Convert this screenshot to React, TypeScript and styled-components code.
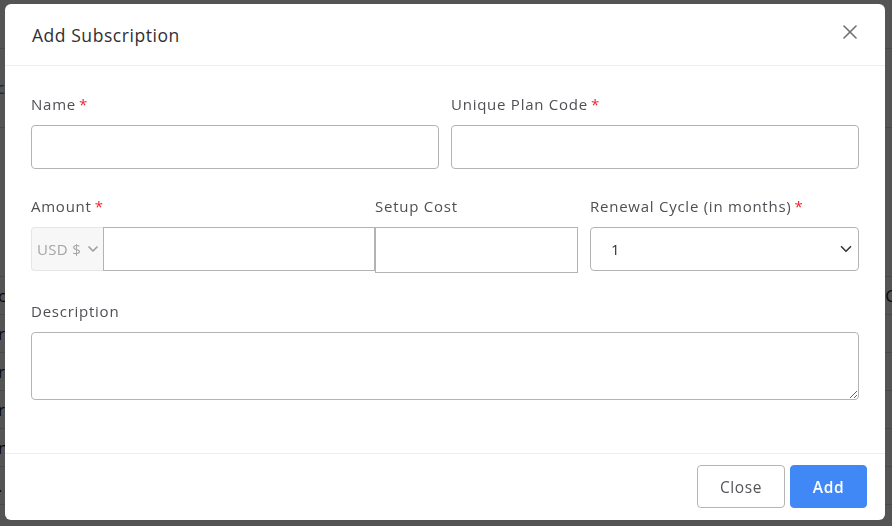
import React from "react";
import styled, { createGlobalStyle } from "styled-components";

const Global = createGlobalStyle`
  html, body { margin: 0; padding: 0; }
  body {
    width: 892px; height: 526px; overflow: hidden;
    background: #ffffff;
    font-family: "Open Sans", "Noto Sans", sans-serif;
  }
  * { box-sizing: border-box; }
`;

/* ---------- background page (behind overlay) ---------- */
const Page = styled.div`
  width: 892px;
  height: 526px;
  display: flex;
  flex-direction: column;
  font-family: "Open Sans", sans-serif;
  color: #222;
`;
const TopBar = styled.div`
  height: 49px;
  border-bottom: 1px solid #dcdcdc;
`;
const FilterArea = styled.div`
  height: 79px;
  border-bottom: 1px solid #dcdcdc;
  display: flex;
  align-items: center;
  font-size: 16px;
  color: #4a6fa5;
  margin-left: -3px;
`;
const Gap = styled.div`
  height: 149px;
  border-bottom: 1px solid #dcdcdc;
`;
const BgRow = styled.div`
  height: 38px;
  flex: none;
  border-bottom: 1px solid #dcdcdc;
  display: flex;
  align-items: center;
  justify-content: space-between;
  font-size: 17px;
  margin: 0 -4px 0 -2px;
`;

/* ---------- overlay & modal ---------- */
const Backdrop = styled.div`
  position: fixed;
  inset: 0;
  background: rgba(0, 0, 0, 0.67);
`;
const Modal = styled.div`
  position: absolute;
  left: 5px;
  top: 4px;
  width: 880px;
  height: 516px;
  background: #fff;
  border-radius: 6px;
  display: flex;
  flex-direction: column;
  font-family: "Open Sans", "Noto Sans", sans-serif;
`;
const Header = styled.div`
  height: 62px;
  flex: none;
  display: flex;
  align-items: center;
  justify-content: space-between;
  padding: 0 23px 0 27px;
  border-bottom: 1px solid #ebeef2;
`;
const Title = styled.h5`
  margin: 0;
  font-size: 17.5px;
  font-weight: 500;
  color: #2f2f33;
  letter-spacing: 0.55px;
`;
const CloseX = styled.button`
  border: 0;
  background: none;
  padding: 0;
  width: 24px;
  height: 24px;
  margin-top: -6px;
  color: #707070;
  display: flex;
  cursor: pointer;
`;
const Body = styled.div`
  flex: 1;
  padding: 26px 26px 0 26px;
  display: flex;
  flex-direction: column;
  gap: 25px;
`;
const Row = styled.div<{ $cols: string; $top?: number }>`
  display: grid;
  grid-template-columns: ${(p) => p.$cols};
  column-gap: 12px;
  margin-top: ${(p) => p.$top ?? 0}px;
`;
const Field = styled.div`
  display: flex;
  flex-direction: column;
  min-width: 0;
`;
const Label = styled.label`
  font-size: 15px;
  line-height: 22px;
  height: 22px;
  color: #4f4f55;
  margin-bottom: 11px;
  white-space: nowrap;
  letter-spacing: 0.75px;
  padding-top: 1px;
`;
const Req = styled.span`
  color: #f0232b;
  margin-left: 3px;
`;
const TextInput = styled.input<{ $h?: number; $square?: boolean }>`
  height: ${(p) => p.$h ?? 44}px;
  width: 100%;
  border: 1px solid #b3b3b3;
  border-radius: ${(p) => (p.$square ? 0 : 4)}px;
  background: #fff;
  font: inherit;
  padding: 0 12px;
  outline: none;
`;
const AmountGroup = styled.div`
  display: grid;
  grid-template-columns: 72px 272px 203px;
  align-items: start;
`;
const AmountLabels = styled.div`
  display: grid;
  grid-template-columns: 344px 203px;
`;
const Currency = styled.div`
  height: 44px;
  background: #f7f7f7;
  border: 1px solid #e6e6e6;
  border-right: 0;
  border-radius: 4px 0 0 4px;
  display: flex;
  align-items: center;
  gap: 4px;
  padding-left: 5px;
  color: #a5a5a5;
  font-size: 15px;
  letter-spacing: 0.3px;
  white-space: nowrap;
`;
const SelectWrap = styled.div`
  position: relative;
  height: 44px;
`;
const Select = styled.select`
  appearance: none;
  width: 100%;
  height: 44px;
  border: 1px solid #b3b3b3;
  border-radius: 4px;
  background: #fff;
  font: inherit;
  font-size: 15px;
  color: #333;
  padding: 0 0 0 20px;
  outline: none;
`;
const SelectArrow = styled.svg`
  position: absolute;
  right: 7px;
  top: 16px;
  pointer-events: none;
`;
const TextArea = styled.textarea`
  width: 100%;
  height: 68px;
  border: 1px solid #b3b3b3;
  border-radius: 4px;
  font: inherit;
  resize: vertical;
  outline: none;
  display: block;
`;
const Footer = styled.div`
  height: 67px;
  flex: none;
  border-top: 1px solid #ebeef2;
  display: flex;
  justify-content: flex-end;
  align-items: flex-start;
  gap: 5px;
  padding: 11px 18px 0 0;
`;
const Btn = styled.button<{ $primary?: boolean }>`
  height: 43px;
  width: ${(p) => (p.$primary ? 77 : 88)}px;
  border-radius: 4px;
  font-family: inherit;
  font-size: 15.5px;
  letter-spacing: 0.6px;
  font-weight: ${(p) => (p.$primary ? 600 : 500)};
  border: 1px solid ${(p) => (p.$primary ? "#3f88f5" : "#b5b5b5")};
  background: ${(p) => (p.$primary ? "#3f88f5" : "#fff")};
  color: ${(p) => (p.$primary ? "#fff" : "#55555a")};
  cursor: pointer;
`;

const bgRows = ["c", "r", "r", "r", "n", "."];

export default function App() {
  return (
    <>
      <Global />
      <Page>
        <TopBar />
        <FilterArea>c</FilterArea>
        <Gap />
        {bgRows.map((t, i) => (
          <BgRow key={i}>
            <span>{t}</span>
            <span>{i === 0 ? "C" : ""}</span>
          </BgRow>
        ))}
      </Page>
      <Backdrop>
        <Modal>
          <Header>
            <Title>Add Subscription</Title>
            <CloseX aria-label="Close">
              <svg width="24" height="24" viewBox="0 0 24 24" fill="none" stroke="currentColor" strokeWidth="1.6" strokeLinecap="round">
                <path d="M18 6 6 18" />
                <path d="m6 6 12 12" />
              </svg>
            </CloseX>
          </Header>
          <Body>
            <Row $cols="1fr 1fr">
              <Field>
                <Label>Name<Req>*</Req></Label>
                <TextInput />
              </Field>
              <Field>
                <Label>Unique Plan Code<Req>*</Req></Label>
                <TextInput />
              </Field>
            </Row>
            <Row $cols="547px 1fr">
              <Field>
                <AmountLabels>
                  <Label>Amount<Req>*</Req></Label>
                  <Label>Setup Cost</Label>
                </AmountLabels>
                <AmountGroup>
                  <Currency>
                    USD $
                    <svg width="16" height="16" viewBox="0 0 24 24" fill="none" stroke="#a0a0a0" strokeWidth="2.6" strokeLinecap="round" strokeLinejoin="round">
                      <path d="m6 9 6 6 6-6" />
                    </svg>
                  </Currency>
                  <TextInput $square />
                  <TextInput $square $h={46} />
                </AmountGroup>
              </Field>
              <Field>
                <Label>Renewal Cycle (in months)<Req>*</Req></Label>
                <SelectWrap>
                  <Select defaultValue="1">
                    <option value="1">1</option>
                    <option value="3">3</option>
                    <option value="6">6</option>
                    <option value="12">12</option>
                  </Select>
                  <SelectArrow width="12" height="12" viewBox="0 0 16 16" fill="none" stroke="#343a40" strokeWidth="2.2" strokeLinecap="round" strokeLinejoin="round">
                    <path d="m2 5 6 6 6-6" />
                  </SelectArrow>
                </SelectWrap>
              </Field>
            </Row>
            <Row $cols="1fr" $top={1}>
              <Field>
                <Label>Description</Label>
                <TextArea />
              </Field>
            </Row>
          </Body>
          <Footer>
            <Btn>Close</Btn>
            <Btn $primary>Add</Btn>
          </Footer>
        </Modal>
      </Backdrop>
    </>
  );
}
